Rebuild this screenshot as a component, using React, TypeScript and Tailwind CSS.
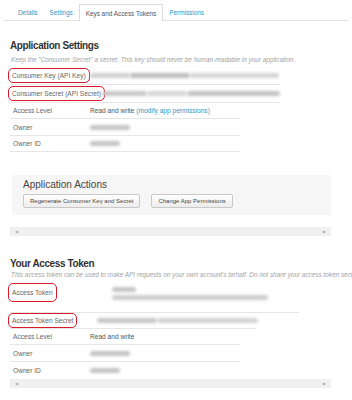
import React from 'react';

const tabs = ['Details', 'Settings', 'Keys and Access Tokens', 'Permissions'];

function Blob({ w, ml = 0, tone = 'bg-[#c4c4c4]' }: { w: number; ml?: number; tone?: string }) {
  return <span className={`block h-[5px] rounded-full blur-[1.5px] ${tone}`} style={{ width: w, marginLeft: ml }} />;
}

function Mark({ children, tall }: { children: React.ReactNode; tall?: boolean }) {
  return (
    <span className={`inline-block whitespace-nowrap -ml-[5px] px-[3px] border-[1.5px] border-[#d6192b] rounded-[5px] ${tall ? 'py-[4px]' : 'py-[2px]'}`}>
      {children}
    </span>
  );
}

function Row({ label, width, h, children }: { label: React.ReactNode; width: number; h: string; children?: React.ReactNode }) {
  return (
    <div className={`flex items-center border-b border-[#e6e6e6] ${h}`} style={{ width }}>
      <div className="w-[80px] shrink-0 pl-[3px] text-[#666] whitespace-nowrap">{label}</div>
      <div className="flex-1 text-[#555] whitespace-nowrap">{children}</div>
    </div>
  );
}

function Scroller() {
  return (
    <div className="ml-[10px] w-[321px] h-[9px] bg-[#f0f0f0] flex items-center justify-between px-[5px] text-[4px] text-[#aaa]">
      <span>◀</span>
      <span>▶</span>
    </div>
  );
}

export default function App() {
  return (
    <div className="w-[352px] h-[400px] overflow-hidden bg-white font-['Liberation_Sans',Arial,sans-serif] text-[6.6px] leading-[9px]">
      {/* tabs */}
      <div className="flex pl-[9px] pt-[4px] border-b border-[#e3e3e3] h-[21px] mx-[3px]">
        {tabs.map((t, i) => (
          <div
            key={t}
            className={`h-[17px] px-[6px] flex items-center text-[6.4px] ${
              i === 2 ? 'bg-white border border-b-0 border-[#ddd] text-[#555] -mb-px' : 'text-[#3596c4]'
            }`}
          >
            {t}
          </div>
        ))}
      </div>

      {/* application settings */}
      <h2 className="mt-[19px] ml-[10px] text-[10px] leading-[12px] font-bold text-[#333] tracking-[-0.4px]">Application Settings</h2>
      <p className="mt-[4px] ml-[11px] text-[6.4px] leading-[8px] italic text-[#a3a3a3] whitespace-nowrap">
        Keep the "Consumer Secret" a secret. This key should never be human-readable in your application.
      </p>

      <div className="mt-[2px] ml-[10px]">
        <Row label={<Mark>Consumer Key (API Key)</Mark>} width={270} h="h-[19px]">
          <div className="flex items-center">
            <Blob w={40} tone="bg-[#d0d0d0]" />
            <Blob w={60} tone="bg-[#bdbdbd]" />
            <Blob w={89} tone="bg-[#d4d4d4]" />
          </div>
        </Row>
        <Row label={<Mark>Consumer Secret (API Secret)</Mark>} width={270} h="h-[18px]">
          <div className="flex items-center ml-[12px]">
            <Blob w={45} tone="bg-[#c6c6c6]" />
            <Blob w={40} tone="bg-[#d6d6d6]" />
            <Blob w={93} tone="bg-[#c2c2c2]" />
          </div>
        </Row>
        <Row label="Access Level" width={230} h="h-[16px]">
          Read and write <span className="text-[#3596c4]">(modify app permissions)</span>
        </Row>
        <Row label="Owner" width={230} h="h-[17px]">
          <Blob w={40} />
        </Row>
        <Row label="Owner ID" width={230} h="h-[16px]">
          <Blob w={30} />
        </Row>
      </div>

      {/* actions */}
      <div className="mt-[23px] ml-[12px] w-[319px] h-[40px] bg-[#f6f6f6] pl-[11px] pt-[4px]">
        <div className="text-[10px] leading-[12px] text-[#444]">Application Actions</div>
        <div className="mt-[3px] flex gap-[11px]">
          <button className="h-[14px] px-[6px] text-[6px] text-[#444] border border-[#c8c8c8] rounded-[2px] bg-gradient-to-b from-white to-[#ececec]">
            Regenerate Consumer Key and Secret
          </button>
          <button className="h-[14px] px-[6px] text-[6px] text-[#444] border border-[#c8c8c8] rounded-[2px] bg-gradient-to-b from-white to-[#ececec]">
            Change App Permissions
          </button>
        </div>
      </div>

      <div className="mt-[12px]">
        <Scroller />
      </div>

      {/* access token */}
      <h2 className="mt-[22px] ml-[10px] text-[10px] leading-[12px] font-bold text-[#333] tracking-[-0.4px]">Your Access Token</h2>
      <p className="mt-[1px] ml-[11px] w-[341px] overflow-hidden text-[6.4px] leading-[8px] italic text-[#a3a3a3] whitespace-nowrap">
        This access token can be used to make API requests on your own account's behalf. Do not share your access token secret with anyone.
      </p>

      <div className="ml-[10px]">
        <div className="flex items-start border-b border-[#e6e6e6] h-[34px] w-[289px] pt-[4px]">
          <div className="w-[80px] shrink-0 pl-[3px] text-[#666]">
            <Mark tall>Access Token</Mark>
          </div>
          <div className="flex flex-col gap-[3px] pt-[4px] ml-[22px]">
            <Blob w={24} />
            <Blob w={156} tone="bg-[#cdcdcd]" />
          </div>
        </div>
        <Row label={<Mark>Access Token Secret</Mark>} width={246} h="h-[16px]">
          <div className="flex items-center ml-[7px]">
            <Blob w={60} tone="bg-[#c6c6c6]" />
            <Blob w={101} tone="bg-[#d2d2d2]" />
          </div>
        </Row>
        <Row label="Access Level" width={230} h="h-[16px]">Read and write</Row>
        <Row label="Owner" width={230} h="h-[17px]">
          <Blob w={40} />
        </Row>
        <div className="flex items-center h-[16px] w-[230px]">
          <div className="w-[80px] shrink-0 pl-[3px] text-[#666]">Owner ID</div>
          <Blob w={30} />
        </div>
      </div>

      <div className="mt-[1px]">
        <Scroller />
      </div>
    </div>
  );
}
